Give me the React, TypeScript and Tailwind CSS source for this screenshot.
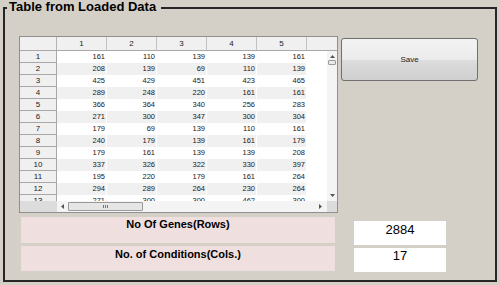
const rows = [
  [161, 110, 139, 139, 161],
  [208, 139, 69, 110, 139],
  [425, 429, 451, 423, 465],
  [289, 248, 220, 161, 161],
  [366, 364, 340, 256, 283],
  [271, 300, 347, 300, 304],
  [179, 69, 139, 110, 161],
  [240, 179, 139, 161, 179],
  [179, 161, 139, 139, 208],
  [337, 326, 322, 330, 397],
  [195, 220, 179, 161, 264],
  [294, 289, 264, 230, 264],
  [271, 300, 300, 462, 300],
];

function Arrow({ dir }: { dir: 'up' | 'down' | 'left' | 'right' }) {
  const pts = {
    up: '0,3 2.5,0 5,3',
    down: '0,0 2.5,3 5,0',
    left: '3,0 0,2.5 3,5',
    right: '0,0 3,2.5 0,5',
  }[dir];
  const vertical = dir === 'up' || dir === 'down';
  return (
    <svg width={vertical ? 5 : 3} height={vertical ? 3 : 5} className="block">
      <polygon points={pts} fill="#555" />
    </svg>
  );
}

function DataGrid() {
  return (
    <div className="w-[319px] h-[177px] shrink-0 border border-[#8f8f8f] bg-white flex flex-col text-[7.5px] text-[#1e1820]">
      <div className="flex h-[14px] shrink-0 border-b border-[#a8a8a8] bg-[#f0f0f0] text-[8px]">
        <div className="w-[37px] border-r border-[#b4b4b4]" />
        {[1, 2, 3, 4, 5].map((c) => (
          <div key={c} className="w-[50px] border-r border-[#c2c2c2] flex items-center justify-center">
            {c}
          </div>
        ))}
        <div className="flex-1" />
      </div>

      <div className="flex flex-1 min-h-0">
        <div className="flex-1 overflow-hidden">
          {rows.map((r, i) => (
            <div key={i} className="flex h-[12px]">
              <div className="w-[37px] shrink-0 bg-[#f0f0f0] border-r border-b border-[#a8a8a8] flex items-center justify-center text-[8px]">
                {i + 1}
              </div>
              <div className={i % 2 ? 'flex bg-[#f0f0f0]' : 'flex bg-white'}>
                {r.map((v, j) => (
                  <div key={j} className="w-[50px] border-r border-white text-right pr-[1px] leading-[12px]">
                    {v}
                  </div>
                ))}
              </div>
            </div>
          ))}
        </div>
        <div className="w-[10px] shrink-0 bg-[#f4f4f4] flex flex-col items-center pt-[4px] pb-[4px]">
          <Arrow dir="up" />
          <div className="mt-[2px] w-[8px] h-[5px] rounded-[1px] border border-[#9a9a9a] bg-[#e8e8e8]" />
          <div className="flex-1" />
          <Arrow dir="down" />
        </div>
      </div>

      <div className="flex h-[11px] shrink-0">
        <div className="w-[37px] bg-[#dcdcdc]" />
        <div className="flex-1 bg-[#f4f4f4] flex items-center pl-[4px] pr-[5px]">
          <Arrow dir="left" />
          <div className="ml-[4px] w-[75px] h-[9px] rounded-[1px] border border-[#9a9a9a] bg-[#e6e6e6] flex items-center justify-center gap-[1px]">
            <div className="w-px h-[3px] bg-[#777]" />
            <div className="w-px h-[3px] bg-[#777]" />
            <div className="w-px h-[3px] bg-[#777]" />
          </div>
          <div className="flex-1" />
          <Arrow dir="right" />
        </div>
        <div className="w-[10px] bg-[#dcdcdc]" />
      </div>
    </div>
  );
}

export default function App() {
  return (
    <div className="w-[500px] h-[285px] bg-[#d4d0c8] pt-[7px] px-[3px] pb-[3px] font-['Liberation_Sans',Arial,sans-serif] text-black">
      <div className="relative h-full border-2 border-[#262626]">
        <div className="absolute -top-[10px] left-[2px] px-[2px] pr-[5px] bg-[#d4d0c8] text-[13px] leading-[16px] font-bold">
          Table from Loaded Data
        </div>

        <div className="pl-[14px] pt-[27px]">
          <div className="flex items-start">
            <DataGrid />
            <button className="ml-[3px] mt-[2px] w-[137px] h-[43px] rounded-[3px] border border-[#707070] bg-[linear-gradient(#f3f3f3_0%,#ebebeb_50%,#dddddd_50%,#cfcfcf_100%)] text-[8px] text-[#222]">
              Save
            </button>
          </div>

          <div className="flex items-start h-[29px] mt-[4px]">
            <div className="ml-[2px] w-[314px] h-[26px] bg-[#efdfdf] text-center text-[11px] leading-[13px] font-bold pt-[1px]">
              No Of Genes(Rows)
            </div>
            <div className="ml-[19px] mt-[4px] w-[92px] h-[24px] bg-white text-center text-[13px] leading-[16px] pt-[1px]">
              2884
            </div>
          </div>

          <div className="flex items-start">
            <div className="ml-[2px] w-[314px] h-[25px] bg-[#efdfdf] text-center text-[11px] leading-[13px] font-bold pt-[2px]">
              No. of Conditions(Cols.)
            </div>
            <div className="ml-[19px] mt-[2px] w-[92px] h-[24px] bg-white text-center text-[13px] leading-[16px]">
              17
            </div>
          </div>
        </div>
      </div>
    </div>
  );
}
